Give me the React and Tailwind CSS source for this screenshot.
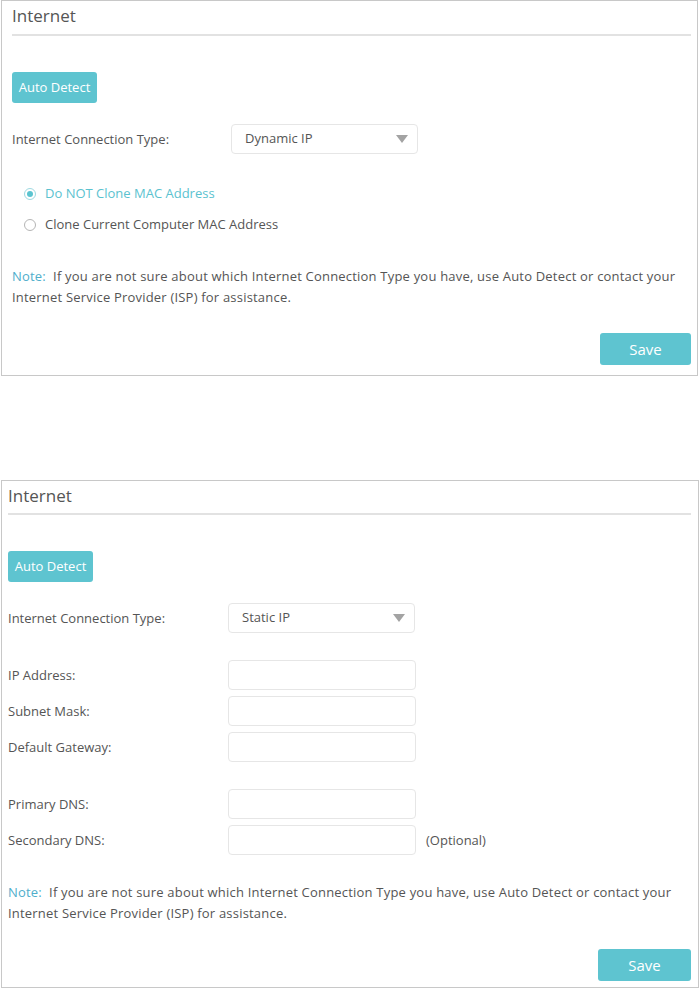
import React, { useState } from 'react';

const font = { fontFamily: '"Open Sans", "Noto Sans", Arial, sans-serif' };

function Caret() {
  return (
    <svg width="12" height="8" viewBox="0 0 12 8" className="shrink-0">
      <path d="M0 0 L12 0 L6 8 Z" fill="#a3a3a3" />
    </svg>
  );
}

function SelectBox({ value }) {
  return (
    <div className="w-[187px] h-[30px] border border-[#e6e6e6] rounded-[4px] flex items-center justify-between pl-[13px] pr-[9px] text-[13px] text-[#555]">
      <span>{value}</span>
      <Caret />
    </div>
  );
}

function TextInput() {
  return <div className="w-[188px] h-[30px] border border-[#e6e6e6] rounded-[4px] bg-white" />;
}

function Radio({ checked, label, onClick }) {
  return (
    <button type="button" onClick={onClick} className="flex items-center h-[20px] gap-[9px] pl-[12px] text-[13px]">
      <span
        className={`w-[12px] h-[12px] rounded-full border flex items-center justify-center ${
          checked ? 'border-[#9fd9e1]' : 'border-[#b5b5b5]'
        }`}
      >
        {checked && <span className="w-[6px] h-[6px] rounded-full bg-[#5bc4d0]" />}
      </span>
      <span className={checked ? 'text-[#5bc2cf]' : 'text-[#555]'}>{label}</span>
    </button>
  );
}

function Note() {
  return (
    <p className="text-[13px] leading-[21px] text-[#555] tracking-[0.2px] pt-[1px]">
      <span className="text-[#4faecb]">Note:</span>&nbsp; If you are not sure about which Internet Connection Type you have, use Auto Detect or contact your Internet Service Provider (ISP) for assistance.
    </p>
  );
}

function Header({ h }) {
  return (
    <div className={`${h} flex items-center pb-[3px] border-b-2 border-[#e2e2e2] text-[17px] text-[#555]`}>
      Internet
    </div>
  );
}

function AutoDetect() {
  return (
    <button type="button" className="w-[85px] h-[31px] rounded-[3px] bg-[#5ec4d0] text-white text-[13px] font-medium">
      Auto Detect
    </button>
  );
}

function SaveButton({ w }) {
  return (
    <div className="flex justify-end">
      <button type="button" className={`${w} h-[32px] rounded-[3px] bg-[#5ec4d0] text-white text-[15px] font-medium`}>
        Save
      </button>
    </div>
  );
}

export default function App() {
  const [clone, setClone] = useState(false);

  const fields = [
    { label: 'IP Address:' },
    { label: 'Subnet Mask:' },
    { label: 'Default Gateway:' },
  ];

  return (
    <div className="w-[699px] h-[990px] bg-white flex flex-col" style={font}>
      {/* Dynamic IP panel */}
      <div className="ml-[1px] w-[697px] border border-[#c8c8c8] pl-[10px] pr-[6px] pb-[10px] flex flex-col">
        <Header h="h-[35px]" />
        <div className="mt-[36px]">
          <AutoDetect />
        </div>
        <div className="mt-[21px] flex items-center text-[13px] text-[#555]">
          <span className="w-[219px] pt-[1px]">Internet Connection Type:</span>
          <SelectBox value="Dynamic IP" />
        </div>
        <div className="mt-[30px] flex flex-col gap-[11px]">
          <Radio checked={!clone} label="Do NOT Clone MAC Address" onClick={() => setClone(false)} />
          <Radio checked={clone} label="Clone Current Computer MAC Address" onClick={() => setClone(true)} />
        </div>
        <div className="mt-[30px]">
          <Note />
        </div>
        <div className="mt-[25px]">
          <SaveButton w="w-[91px]" />
        </div>
      </div>

      {/* Static IP panel */}
      <div className="mt-[104px] ml-[1px] w-[698px] border border-[#c8c8c8] pl-[6px] pr-[7px] pb-[6px] flex flex-col">
        <Header h="h-[34px]" />
        <div className="mt-[36px]">
          <AutoDetect />
        </div>
        <div className="mt-[21px] flex items-center text-[13px] text-[#555]">
          <span className="w-[220px] pt-[1px]">Internet Connection Type:</span>
          <SelectBox value="Static IP" />
        </div>
        <div className="mt-[27px] flex flex-col gap-[6px]">
          {fields.map((f) => (
            <div key={f.label} className="flex items-center text-[13px] text-[#555]">
              <span className="w-[220px] pt-[1px]">{f.label}</span>
              <TextInput />
            </div>
          ))}
        </div>
        <div className="mt-[27px] flex flex-col gap-[6px]">
          <div className="flex items-center text-[13px] text-[#555]">
            <span className="w-[220px] pt-[1px]">Primary DNS:</span>
            <TextInput />
          </div>
          <div className="flex items-center text-[13px] text-[#555]">
            <span className="w-[220px] pt-[1px]">Secondary DNS:</span>
            <TextInput />
            <span className="ml-[10px] pt-[1px]">(Optional)</span>
          </div>
        </div>
        <div className="mt-[26px]">
          <Note />
        </div>
        <div className="mt-[25px]">
          <SaveButton w="w-[93px]" />
        </div>
      </div>
    </div>
  );
}
